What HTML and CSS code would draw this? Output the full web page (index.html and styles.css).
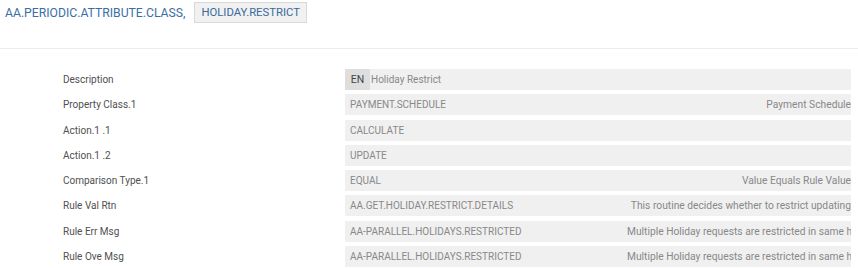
FILE: index.html
```html
<!DOCTYPE html>
<html lang="en">
<head>
  <meta charset="UTF-8" />
  <title>AA.PERIODIC.ATTRIBUTE.CLASS</title>
  <link rel="stylesheet" href="styles.css">
</head>
<body>

<div class="header">
  <span class="app-name">AA.PERIODIC.ATTRIBUTE.CLASS,</span>
  <span class="record-id">HOLIDAY.RESTRICT</span>
</div>

<div class="fields">
  <div class="row">
    <div class="label">Description</div>
    <div class="value">
      <span class="lang">EN</span>
      <span class="code">Holiday Restrict</span>
    </div>
  </div>
  <div class="row">
    <div class="label">Property Class.1</div>
    <div class="value">
      <span class="code">PAYMENT.SCHEDULE</span>
      <span class="desc">Payment Schedule</span>
    </div>
  </div>
  <div class="row">
    <div class="label">Action.1 .1</div>
    <div class="value"><span class="code">CALCULATE</span></div>
  </div>
  <div class="row">
    <div class="label">Action.1 .2</div>
    <div class="value"><span class="code">UPDATE</span></div>
  </div>
  <div class="row">
    <div class="label">Comparison Type.1</div>
    <div class="value">
      <span class="code">EQUAL</span>
      <span class="desc">Value Equals Rule Value</span>
    </div>
  </div>
  <div class="row">
    <div class="label">Rule Val Rtn</div>
    <div class="value">
      <span class="code">AA.GET.HOLIDAY.RESTRICT.DETAILS</span>
      <span class="desc">This routine decides whether to restrict updating</span>
    </div>
  </div>
  <div class="row">
    <div class="label">Rule Err Msg</div>
    <div class="value">
      <span class="code">AA-PARALLEL.HOLIDAYS.RESTRICTED</span>
      <span class="desc">Multiple Holiday requests are restricted in same h</span>
    </div>
  </div>
  <div class="row">
    <div class="label">Rule Ove Msg</div>
    <div class="value">
      <span class="code">AA-PARALLEL.HOLIDAYS.RESTRICTED</span>
      <span class="desc">Multiple Holiday requests are restricted in same h</span>
    </div>
  </div>
</div>

</body>
</html>
```

FILE: styles.css
```css
body {
  margin: 0;
  font-family: Roboto, "Liberation Sans", sans-serif;
  background: #fff;
  overflow: hidden;
}

.header {
  display: flex;
  align-items: center;
  gap: 9px;
  height: 25px;
  padding: 0 0 23px 5px;
  border-bottom: 1px solid #ececec;
}

.app-name {
  font-size: 12.2px;
  color: #3a6ea5;
}

.record-id {
  font-size: 11.3px;
  color: #3a6a9c;
  background: #f1f1f1;
  border: 1px solid #d9d9d9;
  padding: 3px 6px;
  line-height: 13px;
}

.fields {
  padding-top: 20px;
}

.row {
  display: flex;
  align-items: center;
  height: 21px;
  margin-bottom: 4.3px;
}

.label {
  width: 282px;
  padding-left: 63px;
  font-size: 10px;
  color: #505050;
}

.value {
  display: flex;
  align-items: center;
  width: 506px;
  height: 21px;
  background: #f0f0f0;
  font-size: 10px;
  color: #888;
  overflow: hidden;
}

.lang {
  display: flex;
  align-items: center;
  justify-content: center;
  width: 25px;
  height: 21px;
  background: #dedede;
  color: #444;
  font-size: 10.5px;
  margin-right: 1px;
}

.code {
  width: 277px;
  flex-shrink: 0;
  padding-left: 5px;
  white-space: nowrap;
}

.lang + .code {
  padding-left: 0;
}

.desc {
  flex: 1;
  min-width: 0;
  font-size: 10.25px;
  text-align: right;
  white-space: nowrap;
  overflow: hidden;
}
```
